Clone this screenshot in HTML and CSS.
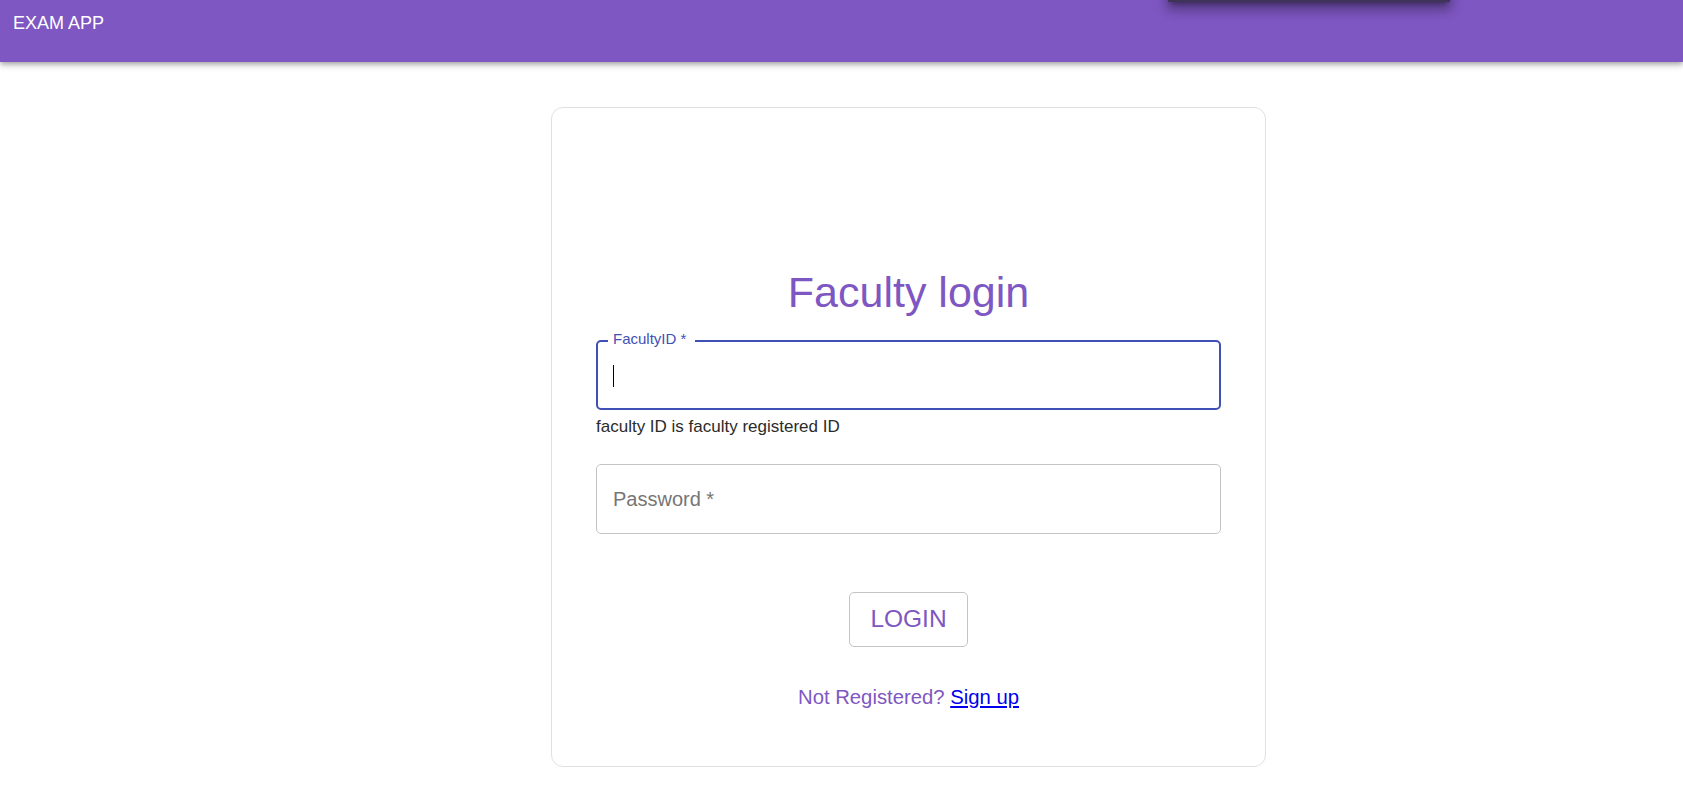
FILE: index.html
```html
<!DOCTYPE html>
<html lang="en">
<head>
<meta charset="utf-8">
<title>Exam App - Faculty login</title>
<link rel="stylesheet" href="styles.css">
</head>
<body>
<header class="app-bar">
  <div class="app-title">EXAM APP</div>
  <div class="menu-paper"></div>
</header>
<main class="page">
  <section class="card">
    <h1 class="card-title">Faculty login</h1>
    <div class="field field-focused">
      <label class="field-label" for="fid">FacultyID *</label>
      <input id="fid" class="field-input" type="text">
      <span class="caret"></span>
    </div>
    <p class="helper">faculty ID is faculty registered ID</p>
    <div class="field field-second">
      <input class="field-input" type="password" placeholder="Password *" aria-label="Password">
    </div>
    <button class="login-btn" type="button">LOGIN</button>
    <p class="signup">Not Registered? <a href="#" class="signup-link">Sign up</a></p>
  </section>
</main>
</body>
</html>
```
FILE: styles.css
```css
* { box-sizing: border-box; }
html, body { margin: 0; padding: 0; background: #fff; }
body { font-family: "Liberation Sans", Arial, sans-serif; overflow: hidden; }

.app-bar {
  position: relative;
  height: 62px;
  background: #7e57c2;
  padding: 13px 0 0 13px;
  box-shadow: 0 2px 4px -1px rgba(0,0,0,.2), 0 4px 5px 0 rgba(0,0,0,.14), 0 1px 10px 0 rgba(0,0,0,.12);
  z-index: 2;
}
.app-title {
  color: #fff;
  font-size: 18px;
  line-height: 21px;
}
.menu-paper {
  position: absolute;
  top: -100px;
  left: 1168px;
  width: 282px;
  height: 102px;
  background: #3f3458;
  box-shadow: 0 5px 5px -3px rgba(0,0,0,.3), 0 8px 10px 1px rgba(0,0,0,.2), 0 3px 14px 2px rgba(0,0,0,.16);
}

.page { padding-top: 45px; }
.card {
  margin-left: 551px;
  width: 715px;
  height: 660px;
  border: 1px solid #e0e0e0;
  border-radius: 12px;
  padding: 159px 44px 0;
  display: flex;
  flex-direction: column;
}
.card-title {
  margin: 0;
  text-align: center;
  font-weight: 400;
  font-size: 43px;
  line-height: 50px;
  color: #7e57c2;
}

.field {
  position: relative;
  height: 70px;
  margin-top: 23px;
}
.field-input {
  display: block;
  width: 100%;
  height: 70px;
  margin: 0;
  border: 1px solid #c4c4c4;
  border-radius: 5px;
  padding: 0 16px;
  font-family: inherit;
  font-size: 20px;
  color: #222;
  background: #fff;
  outline: none;
  caret-color: transparent;
}
.field-input::placeholder { color: #767676; opacity: 1; }
.field-focused .field-input {
  border: 2px solid #3f51b5;
  padding: 0 15px;
}
.field-label {
  position: absolute;
  top: -9px;
  left: 12px;
  padding: 0 9px 0 5px;
  background: #fff;
  color: #3f51b5;
  font-size: 15px;
  line-height: 15px;
  z-index: 1;
}
.caret {
  position: absolute;
  left: 17px;
  top: 25px;
  width: 1px;
  height: 22px;
  background: #000;
}
.helper {
  margin: 7px 0 0;
  font-size: 17px;
  line-height: 20px;
  color: #2b2b2b;
}
.field-second { margin-top: 27px; }

.login-btn {
  align-self: center;
  margin-top: 58px;
  height: 55px;
  padding: 0 20px;
  border: 1px solid #c4c4c4;
  border-radius: 5px;
  background: #fff;
  color: #7e57c2;
  font-family: inherit;
  font-size: 24.5px;
  line-height: 1;
}
.signup {
  margin: 39px 0 0;
  text-align: center;
  font-size: 20.3px;
  line-height: 23px;
  color: #7e57c2;
}
.signup-link { color: #0000ee; text-decoration: underline; }
```
